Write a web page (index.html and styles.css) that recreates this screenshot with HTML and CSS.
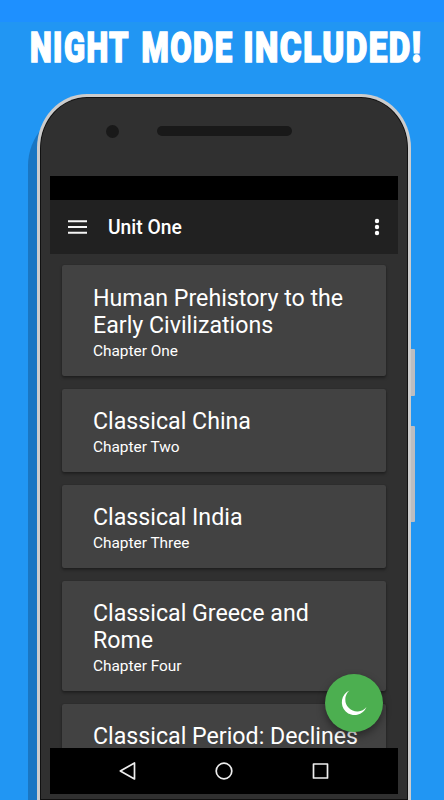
FILE: index.html
```html
<!DOCTYPE html>
<html lang="en">
<head>
    <meta charset="UTF-8">
    <meta name="viewport" content="width=device-width, initial-scale=1.0">
    <title>Night mode included!</title>
    <link rel="stylesheet" href="styles.css">
</head>
<body>
    <div class="banner"></div>
    <h1 class="headline">
        <svg width="444" height="50" viewBox="0 0 444 50">
            <text x="30" y="40" textLength="100" lengthAdjust="spacingAndGlyphs">NIGHT</text>
            <text x="141.5" y="40" textLength="92" lengthAdjust="spacingAndGlyphs">MODE</text>
            <text x="243.5" y="40" textLength="179" lengthAdjust="spacingAndGlyphs">INCLUDED!</text>
        </svg>
    </h1>
    <div class="phone">
        <span class="side-button power"></span>
        <span class="side-button volume"></span>
        <div class="phone-top">
            <span class="camera"></span>
            <span class="speaker"></span>
        </div>
        <div class="screen">
            <div class="status-bar"></div>
            <header class="toolbar">
                <svg class="menu-icon" width="19" height="14" viewBox="0 0 19 14">
                    <path d="M0 1.2h19M0 7h19M0 12.8h19" stroke="#f5f5f5" stroke-width="1.9"/>
                </svg>
                <span class="toolbar-title">Unit One</span>
                <svg class="more-icon" width="6" height="18" viewBox="0 0 6 18">
                    <circle cx="3" cy="3" r="2.2"/>
                    <circle cx="3" cy="9" r="2.2"/>
                    <circle cx="3" cy="15" r="2.2"/>
                </svg>
            </header>
            <main class="chapters">
                <div class="card">
                    <h2>Human Prehistory to the Early Civilizations</h2>
                    <p>Chapter One</p>
                </div>
                <div class="card">
                    <h2>Classical China</h2>
                    <p>Chapter Two</p>
                </div>
                <div class="card">
                    <h2>Classical India</h2>
                    <p>Chapter Three</p>
                </div>
                <div class="card">
                    <h2>Classical Greece and Rome</h2>
                    <p>Chapter Four</p>
                </div>
                <div class="card">
                    <h2>Classical Period: Declines</h2>
                </div>
                <button class="fab" aria-label="Night mode">
                    <svg width="58" height="58" viewBox="0 0 58 58">
                        <path d="M24.5 16.5A12.8 12.8 0 1 0 41.5 33A11.9 11.9 0 1 1 24.5 16.5Z" fill="#fff"/>
                    </svg>
                </button>
            </main>
            <nav class="nav-bar">
                <svg width="18" height="20" viewBox="0 0 18 20">
                    <path d="M15.5 2v16L1.3 10Z"/>
                </svg>
                <svg width="18" height="20" viewBox="0 0 18 20">
                    <circle cx="9" cy="10" r="7.8"/>
                </svg>
                <svg width="18" height="20" viewBox="0 0 18 20">
                    <rect x="1.5" y="3" width="14" height="14"/>
                </svg>
            </nav>
        </div>
    </div>
</body>
</html>
```

FILE: styles.css
```css
body {
    margin: 0;
    height: 800px;
    overflow: hidden;
    background-color: #2196f3;
    font-family: Roboto, sans-serif;
    color: #fff;
}
.banner {
    height: 22px;
    background-color: #1e90ff;
}
.headline {
    margin: 0;
    height: 72px;
}
.headline svg {
    display: block;
}
.headline text {
    font-family: Roboto, sans-serif;
    font-size: 43px;
    font-weight: 900;
    letter-spacing: 2px;
    fill: #fff;
    stroke: #fff;
    stroke-width: 1.6px;
    stroke-linejoin: miter;
}
.phone {
    position: relative;
    box-sizing: border-box;
    width: 374px;
    height: 706px;
    margin-left: 37px;
    padding: 0 10px;
    border: 3px solid #ccc;
    border-bottom: none;
    border-radius: 50px 50px 0 0 / 54px 54px 0 0;
    background-color: #303030;
    box-shadow: inset 0 0 0 1px #111, -9px 18px 0 #1976c3;
}
.side-button {
    position: absolute;
    right: -7px;
    width: 4px;
    border-radius: 0 1px 1px 0;
    background-color: #bdbdc0;
}
.power {
    top: 252px;
    height: 47px;
}
.volume {
    top: 329px;
    height: 96px;
}
.phone-top {
    display: flex;
    height: 79px;
    padding-left: 56px;
    box-sizing: border-box;
}
.camera {
    width: 13px;
    height: 13px;
    margin-top: 28px;
    border-radius: 50%;
    background-color: #191919;
}
.speaker {
    width: 135px;
    height: 10px;
    margin: 29px 0 0 38px;
    border-radius: 5px;
    background-color: #191919;
}
.screen {
    display: flex;
    flex-direction: column;
    width: 348px;
    height: 618px;
}
.status-bar {
    height: 24px;
    background-color: #000;
}
.toolbar {
    display: flex;
    align-items: center;
    box-sizing: border-box;
    height: 54px;
    padding: 0 18px;
    background-color: #212121;
}
.toolbar-title {
    flex: 1;
    margin: 1px 0 0 21px;
    font-size: 19.3px;
    font-weight: 500;
}
.more-icon {
    fill: #fff;
}
.chapters {
    position: relative;
    flex: 1;
    min-height: 0;
    display: flex;
    flex-direction: column;
    gap: 13px;
    padding: 11.4px 12px 0;
    overflow: hidden;
}
.card {
    flex-shrink: 0;
    box-sizing: border-box;
    padding: 19.5px 20px 15px 31px;
    border-radius: 2px;
    background-color: #424242;
    box-shadow: 0 2px 3px rgba(0, 0, 0, 0.35), 0 0 1px rgba(0, 0, 0, 0.3);
}
.card h2 {
    margin: 0;
    font-size: 23.2px;
    font-weight: 400;
    line-height: 27.3px;
}
.card p {
    margin: 2.2px 0 0;
    font-size: 15.4px;
    line-height: 19px;
}
.fab {
    position: absolute;
    right: 15px;
    bottom: 16px;
    width: 58px;
    height: 58px;
    padding: 0;
    border: none;
    border-radius: 50%;
    background-color: #4caf50;
    box-shadow: 0 4px 8px rgba(0, 0, 0, 0.4);
}
.fab svg {
    display: block;
}
.nav-bar {
    display: flex;
    align-items: center;
    justify-content: space-between;
    height: 46px;
    padding: 0 68.5px;
    background-color: #000;
}
.nav-bar svg {
    fill: none;
    stroke: #eee;
    stroke-width: 1.7px;
    stroke-linejoin: round;
}
```
